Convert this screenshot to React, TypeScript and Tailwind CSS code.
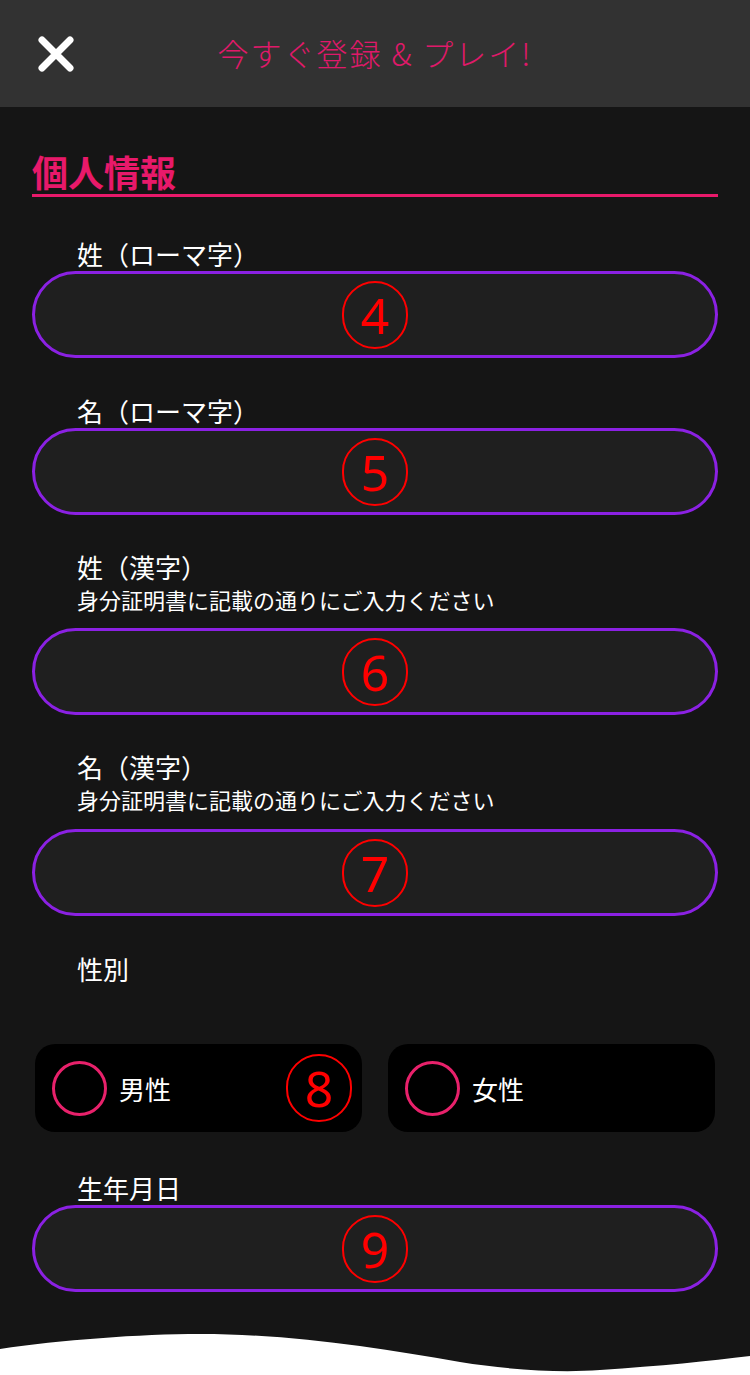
const fontStack = {fontFamily: '"Noto Sans CJK JP", "Noto Sans", sans-serif'};

function CircledNumber({value}: {value: string}) {
  return (
    <span
      className="flex h-[68px] w-[66px] items-center justify-center rounded-full border-2 border-[#ff0000] text-[50px] leading-none text-[#ff0000]"
      style={{fontFamily: '"Noto Sans", sans-serif'}}
    >
      {value}
    </span>
  );
}

function FieldLabel({label, note}: {label: string; note?: string}) {
  return (
    <div className="pl-[45px] text-white">
      <p className="text-[26px] leading-[34px]">{label}</p>
      {note ? <p className="text-[22px] leading-[30px]">{note}</p> : null}
    </div>
  );
}

function PillInput({marker, className = ""}: {marker: string; className?: string}) {
  return (
    <div
      className={`flex h-[87px] items-center justify-center rounded-full border-[3px] border-[#8b21e3] bg-[#1f1f1f] ${className}`}
    >
      <CircledNumber value={marker} />
    </div>
  );
}

function RadioOption({label, marker}: {label: string; marker?: string}) {
  return (
    <div className="relative flex h-[88px] items-center gap-[12px] rounded-[20px] bg-black pl-[17px]">
      <span className="h-[55px] w-[55px] rounded-full border-[3px] border-[#e8216b]" />
      <span className="text-[26px] text-white">{label}</span>
      {marker ? (
        <span className="absolute right-[10px] top-1/2 -translate-y-1/2">
          <CircledNumber value={marker} />
        </span>
      ) : null}
    </div>
  );
}

export default function App() {
  return (
    <div className="w-[750px] bg-[#151515]" style={fontStack}>
      <header className="grid h-[107px] grid-cols-[1fr_auto_1fr] items-center bg-[#323232]">
        <div className="pl-[37px]">
          <svg width="38" height="38" viewBox="0 0 38 38" aria-label="閉じる">
            <path
              d="M5 5 L33 33 M33 5 L5 33"
              stroke="#ffffff"
              strokeWidth="7"
              strokeLinecap="round"
            />
          </svg>
        </div>
        <h1 className="text-[31px] font-light tracking-[2px] text-[#e0196a]">
          今すぐ登録 &amp; プレイ!
        </h1>
        <div />
      </header>

      <main className="px-[32px] pt-[42px]">
        <h2 className="border-b-[3px] border-[#e8196a] text-[36px] font-bold leading-[45px] text-[#e8196a]">
          個人情報
        </h2>

        <div className="mt-[40px]">
          <FieldLabel label="姓（ローマ字）" />
          <PillInput marker="4" />
        </div>

        <div className="mt-[36px]">
          <FieldLabel label="名（ローマ字）" />
          <PillInput marker="5" />
        </div>

        <div className="mt-[35px]">
          <FieldLabel label="姓（漢字）" note="身分証明書に記載の通りにご入力ください" />
          <PillInput marker="6" className="mt-[14px]" />
        </div>

        <div className="mt-[35px]">
          <FieldLabel label="名（漢字）" note="身分証明書に記載の通りにご入力ください" />
          <PillInput marker="7" className="mt-[15px]" />
        </div>

        <div className="mt-[36px]">
          <FieldLabel label="性別" />
          <div className="mt-[58px] grid grid-cols-2 gap-[26px] px-[3px]">
            <RadioOption label="男性" marker="8" />
            <RadioOption label="女性" />
          </div>
        </div>

        <div className="mt-[39px]">
          <FieldLabel label="生年月日" />
          <PillInput marker="9" />
        </div>
      </main>

      <svg className="mt-[34px] block" width="750" height="50" viewBox="0 0 750 50" preserveAspectRatio="none">
        <path
          d="M0 23 C60 14 140 8 200 8 C290 8 380 22 460 36 C510 44 560 47 600 44 C660 40 710 35 750 30 V50 H0 Z"
          fill="#ffffff"
        />
      </svg>
    </div>
  );
}
